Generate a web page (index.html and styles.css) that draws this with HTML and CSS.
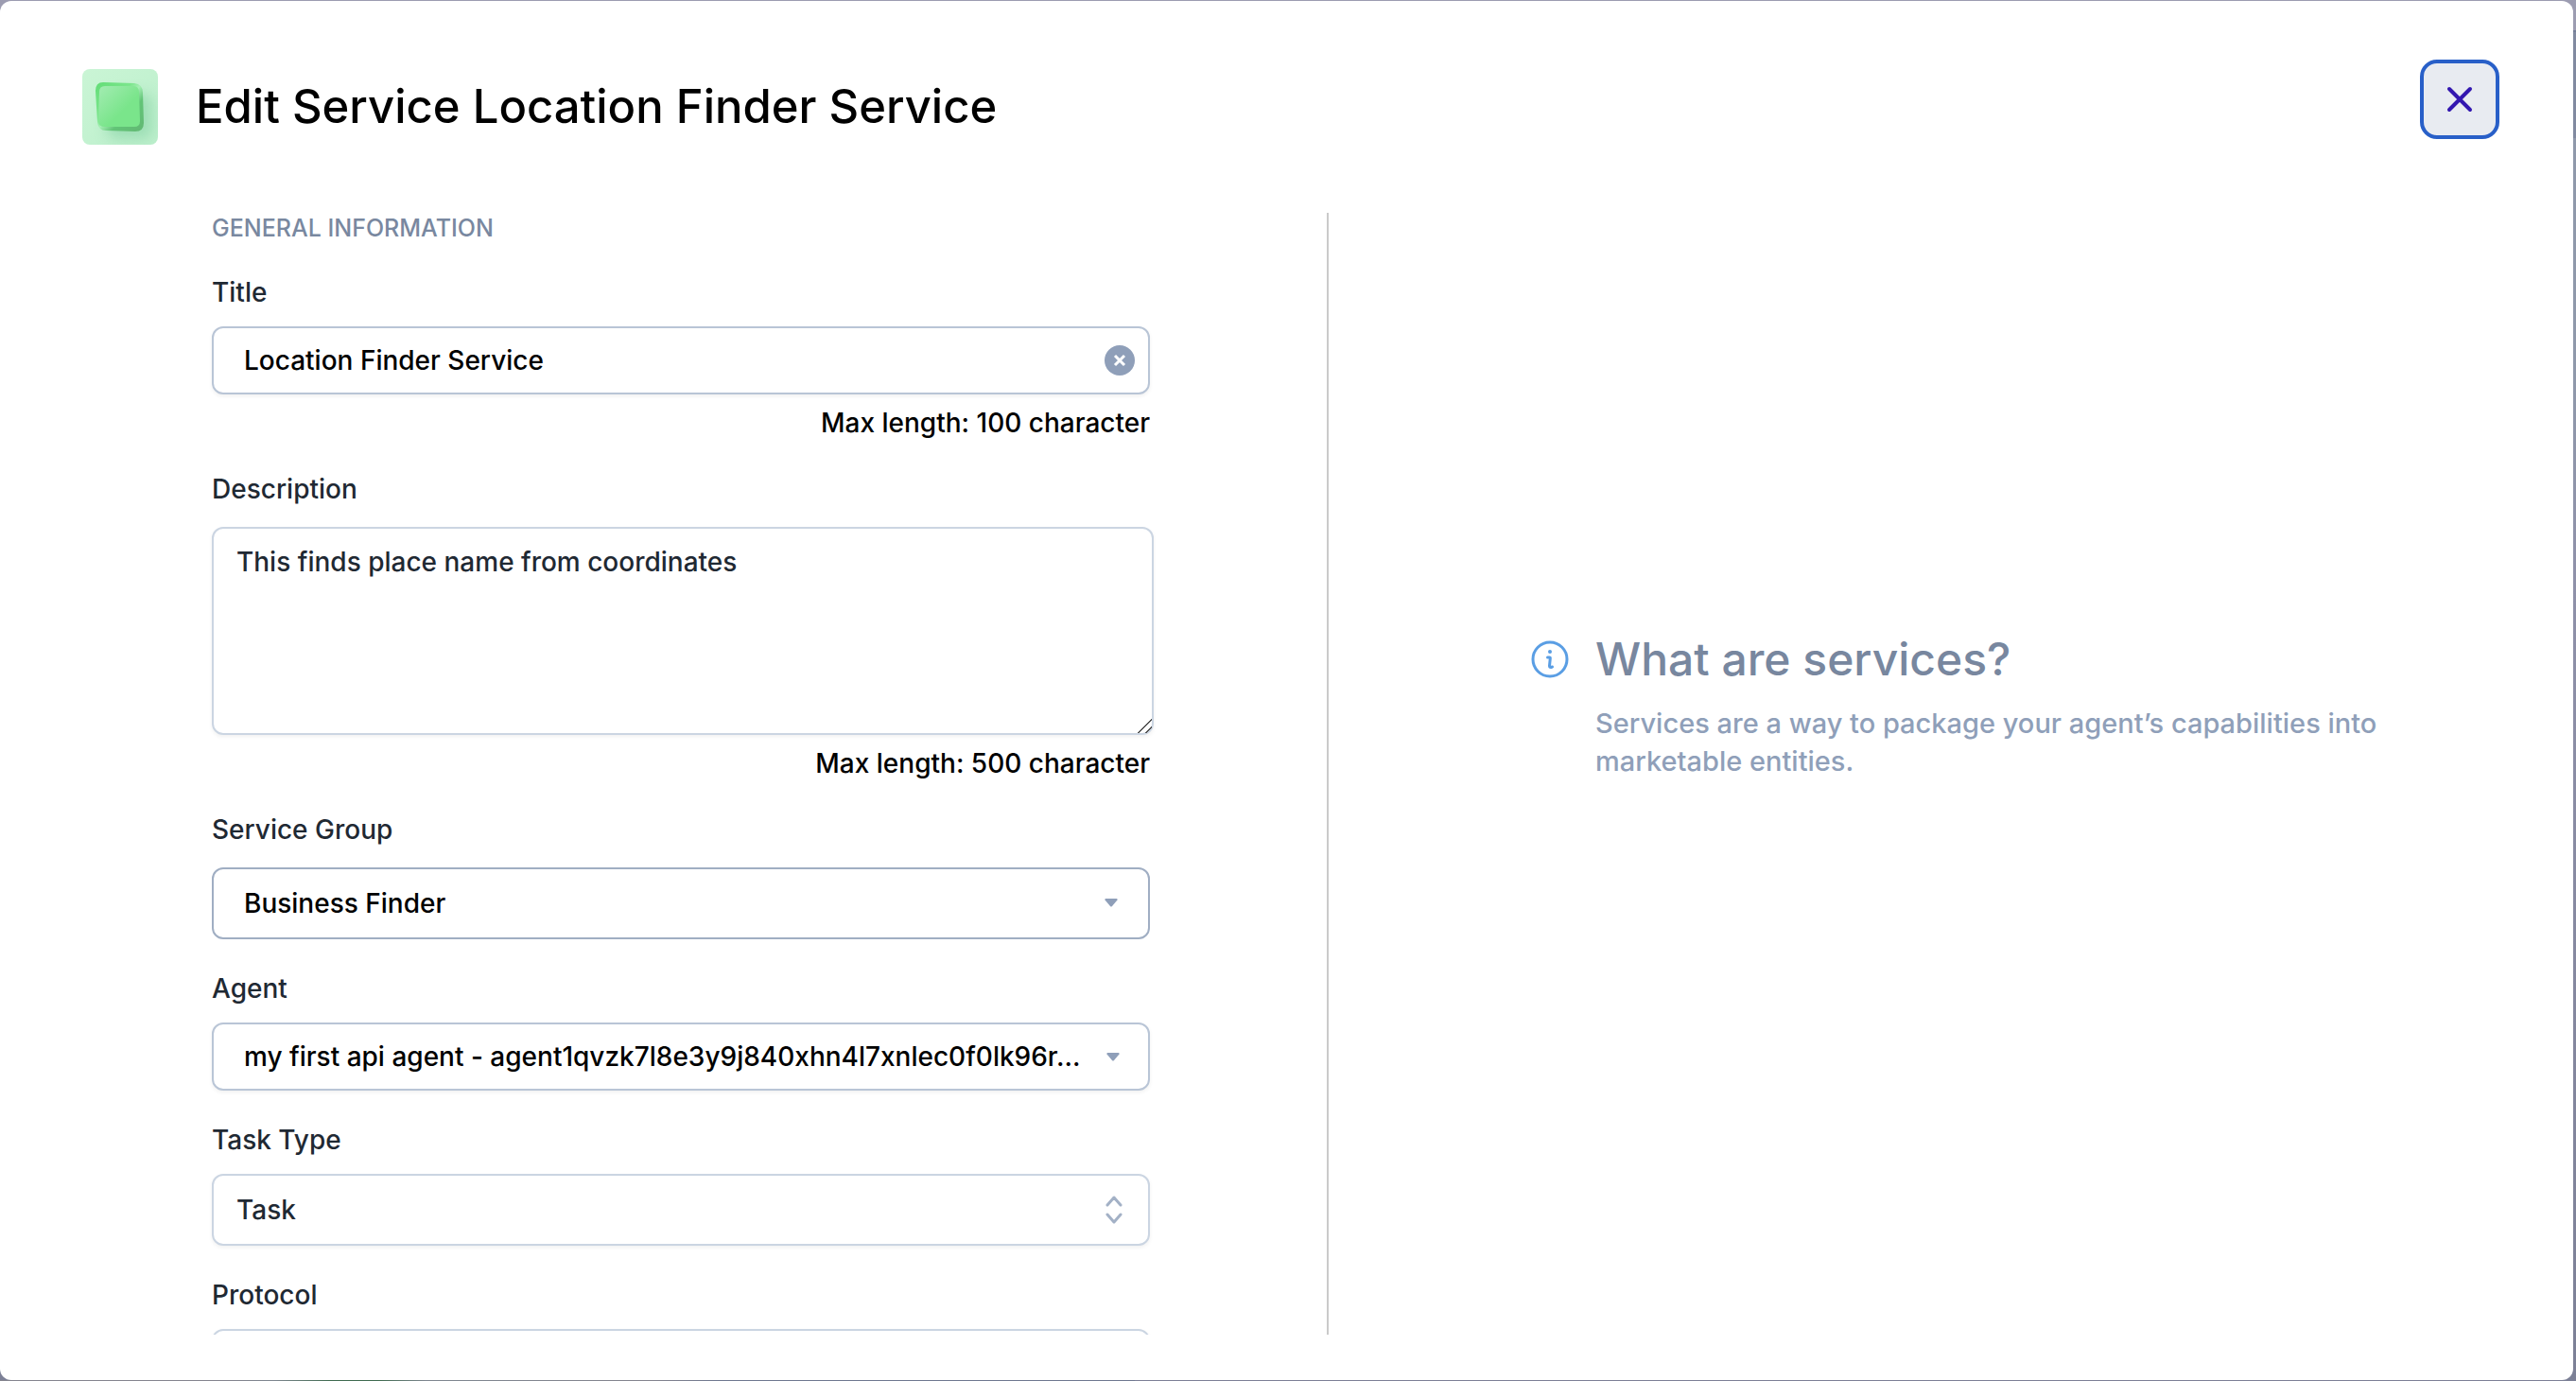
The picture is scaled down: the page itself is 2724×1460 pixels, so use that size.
FILE: index.html
```html
<!DOCTYPE html>
<html lang="en">
<head>
<meta charset="utf-8">
<title>Edit Service</title>
<link rel="stylesheet" href="styles.css">
</head>
<body>
<div class="modal" role="dialog" aria-labelledby="modal-title">
  <header class="modal-header">
    <div class="brand">
      <svg class="brand-icon" viewBox="0 0 80 80" aria-hidden="true">
        <defs>
          <linearGradient id="tile" x1="0" y1="0" x2="1" y2="1">
            <stop offset="0" stop-color="#caf5d5"/>
            <stop offset="1" stop-color="#bcefcc"/>
          </linearGradient>
          <linearGradient id="rim" x1="0" y1="0" x2="1" y2="1">
            <stop offset="0" stop-color="#62dd76"/>
            <stop offset="0.38" stop-color="#7be58c"/>
            <stop offset="0.5" stop-color="#a5efb4"/>
            <stop offset="0.66" stop-color="#62c477"/>
            <stop offset="1" stop-color="#62b873"/>
          </linearGradient>
          <linearGradient id="face" x1="0" y1="0" x2="1" y2="1">
            <stop offset="0" stop-color="#a3ecb2"/>
            <stop offset="0.6" stop-color="#7ae58b"/>
            <stop offset="1" stop-color="#7ae58b"/>
          </linearGradient>
          <filter id="soft" x="-50%" y="-50%" width="200%" height="200%"><feGaussianBlur stdDeviation="7"/></filter>
          <clipPath id="tile-clip"><rect width="80" height="80" rx="8"/></clipPath>
        </defs>
        <g clip-path="url(#tile-clip)">
          <rect width="80" height="80" fill="url(#tile)"/>
          <rect x="26" y="26" width="48" height="48" rx="10" fill="#8fd7aa" opacity="0.7" filter="url(#soft)"/>
        </g>
        <path d="M22 14 L55 15 Q64 16 64 25 L65 57 Q65 66 56 66 L25 65 Q17 65 16 56 L14 23 Q14 14 22 14Z" fill="url(#rim)"/>
        <path d="M24 18 L54 18 Q60 18 60 25 L61 55 Q61 61 55 61 L24 61 Q17 61 17 55 L18 24 Q18 18 24 18Z" fill="url(#face)"/>
      </svg>
      <h1 class="modal-title" id="modal-title">Edit Service Location Finder Service</h1>
    </div>
    <button class="close" type="button" aria-label="Close">
      <svg viewBox="0 0 28 28" width="28" height="28" aria-hidden="true"><path d="M3 3 25 25M25 3 3 25" fill="none" stroke="#3317b0" stroke-width="4" stroke-linecap="round"/></svg>
    </button>
  </header>

  <div class="modal-body">
    <form class="form">
      <h2 class="section">GENERAL INFORMATION</h2>

      <div class="field">
        <label for="title">Title</label>
        <div class="control">
          <input class="box strong" id="title" type="text" value="Location Finder Service">
          <button class="clear" type="button" aria-label="Clear title">
            <svg viewBox="0 0 32 32" width="32" height="32" aria-hidden="true"><circle cx="16" cy="16" r="16" fill="#8f9fb9"/><path d="M11 11 21 21M21 11 11 21" stroke="#fff" stroke-width="3"/></svg>
          </button>
        </div>
        <p class="hint">Max length: 100 character</p>
      </div>

      <div class="field roomy">
        <label for="description">Description</label>
        <textarea class="box area" id="description">This finds place name from coordinates</textarea>
        <p class="hint">Max length: 500 character</p>
      </div>

      <div class="field roomy">
        <label for="group">Service Group</label>
        <div class="control">
          <select class="box tall flat" id="group"><option>Business Finder</option></select>
          <svg class="marker" viewBox="0 0 32 32" aria-hidden="true"><path d="M9 11H21Q22 11.500 21.500 12.500L16 19Q15 20 14 19L8.500 12.500Q8 11.500 9 11Z" fill="#8f9fb9"/></svg>
        </div>
      </div>

      <div class="field">
        <label for="agent">Agent</label>
        <div class="control">
          <select class="box strong" id="agent"><option>my first api agent - agent1qvzk7l8e3y9j840xhn4l7xnlec0f0lk96r…</option></select>
          <svg class="marker" viewBox="0 0 32 32" aria-hidden="true"><path d="M11 12H23Q24 12.500 23.500 13.500L18 20Q17 21 16 20L10.500 13.500Q10 12.500 11 12Z" fill="#8f9fb9"/></svg>
        </div>
      </div>

      <div class="field">
        <label for="task">Task Type</label>
        <div class="control">
          <select class="box tall soft" id="task"><option>Task</option></select>
          <svg class="marker" viewBox="0 0 32 32" aria-hidden="true"><path d="M11 11 18 3 25 11M11 21 18 29 25 21" fill="none" stroke="#a3b1c6" stroke-width="3" stroke-linecap="round" stroke-linejoin="round"/></svg>
        </div>
      </div>

      <div class="field">
        <label for="protocol">Protocol</label>
        <div class="control">
          <select class="box tall soft" id="protocol"><option></option></select>
        </div>
      </div>
    </form>

    <aside class="info">
      <svg class="info-icon" viewBox="0 0 40 40" aria-hidden="true"><circle cx="20" cy="20" r="18" fill="none" stroke="#5a9ee4" stroke-width="3"/><circle cx="20" cy="12" r="2" fill="#5a9ee4"/><path d="M17.500 18H19.500Q20.500 18 20.300 19L19.500 27Q19.500 28.500 21 28.500L22.500 28" fill="none" stroke="#5a9ee4" stroke-width="3" stroke-linecap="round" stroke-linejoin="round"/></svg>
      <div class="info-text">
        <h2 class="info-title">What are services?</h2>
        <p class="info-copy">Services are a way to package your agent’s capabilities into marketable entities.</p>
      </div>
    </aside>
  </div>
</div>
</body>
</html>
```
FILE: styles.css
```css
* {
  box-sizing: border-box;
}

body {
  margin: 0;
  height: 100vh;
  display: flex;
  padding: 1px 3px 1px 0;
  background:
    linear-gradient(90deg, #85858f 0 240px, #7f8790 290px, #3f6b50 350px 400px, #7f8790 450px, #85858f 690px, #6f7890 760px) bottom left / 1200px 1px no-repeat,
    linear-gradient(#9c9cb1 0 32px, #757e97 32px 34px, #818aa0 34px 146px, #8f98aa 146px 400px, #8f91a9 600px, #7c8096);
  font-family: Inter, "Noto Sans", sans-serif;
  font-size: 28px;
  font-weight: 500;
  line-height: 40px;
  color: #1f2933;
}

h1, h2, p {
  margin: 0;
  font-weight: 500;
}

.modal {
  flex: 1;
  min-width: 0;
  display: flex;
  flex-direction: column;
  padding-bottom: 48px;
  border-radius: 12px;
  background: #fff;
}

.modal-header {
  display: flex;
  justify-content: space-between;
  align-items: flex-start;
  padding: 62px 78px 72px 87px;
}

.brand {
  display: flex;
  align-items: center;
  gap: 40px;
  padding-top: 10px;
}

.brand-icon {
  width: 80px;
  height: 80px;
}

.modal-title {
  font-size: 49px;
  line-height: 60px;
  color: #000;
}

.close {
  display: grid;
  place-items: center;
  width: 84px;
  height: 84px;
  padding: 0;
  border: 4px solid #285fc8;
  border-radius: 18px;
  background: #e8ebf1;
}

.modal-body {
  flex: 1;
  min-height: 0;
  display: grid;
  grid-template-columns: minmax(0, 1405fr) minmax(0, 1316fr);
}

.form {
  display: flex;
  flex-direction: column;
  gap: 32px;
  padding: 0 187px 0 224px;
  border-right: 2px solid #cacaca;
  overflow-y: auto;
  overflow-x: hidden;
  scrollbar-width: none;
}

.section {
  font-size: 25px;
  line-height: 32px;
  color: #7988a0;
}

.field {
  display: flex;
  flex-direction: column;
  gap: 16px;
}

.roomy {
  gap: 20px;
}

.control {
  position: relative;
  display: flex;
}

.box {
  width: 100%;
  height: 72px;
  padding: 0 92px 0 32px;
  border: 2px solid #cbd5e2;
  border-radius: 12px;
  background: #fff;
  box-shadow: 0 2px 4px rgba(0, 0, 0, 0.06);
  font: inherit;
  color: #000;
  appearance: none;
}

.strong {
  border-color: #b9c5d6;
}

.tall {
  height: 76px;
}

.flat {
  border-color: #a0aec3;
  box-shadow: none;
}

select.box {
  padding-right: 60px;
}

.soft,
.area {
  padding-left: 24px;
  color: #1f2933;
}

.area {
  display: block;
  width: calc(100% + 4px);
  height: 220px;
  padding-top: 15px;
  resize: vertical;
}

.area::-webkit-resizer {
  background:
    linear-gradient(135deg, transparent 48%, #555 48% 54%, transparent 54% 76%, #555 76% 82%, transparent 82%);
}

.hint {
  margin-top: -4px;
  line-height: 36px;
  text-align: right;
  color: #000;
}

.roomy .hint {
  margin-top: -8px;
}

.clear {
  position: absolute;
  right: 16px;
  top: 20px;
  display: flex;
  padding: 0;
  border: 0;
  background: none;
}

.marker {
  position: absolute;
  right: 24px;
  top: 50%;
  width: 32px;
  height: 32px;
  margin-top: -16px;
  pointer-events: none;
}

.info {
  display: flex;
  align-items: flex-start;
  align-self: center;
  justify-self: center;
  gap: 28px;
  max-width: 904px;
  margin-bottom: 144px;
  padding-left: 8px;
}

.info-icon {
  flex: none;
  width: 40px;
  height: 40px;
  margin-top: 10px;
}

.info-title {
  margin-bottom: 18px;
  font-size: 48px;
  line-height: 60px;
  color: #78879f;
}

.info-copy {
  font-size: 29px;
  color: #8f9fb9;
}
```
